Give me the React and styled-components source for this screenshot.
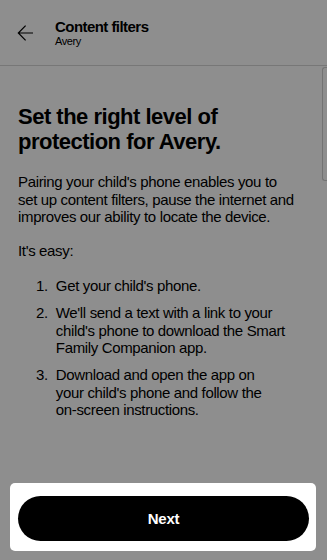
import React from "react";
import styled, { createGlobalStyle } from "styled-components";

const GlobalStyle = createGlobalStyle`
  html, body { margin: 0; padding: 0; background: #ffffff; }
  body { font-family: "Liberation Sans", Arial, sans-serif; color: #000; }
  * { box-sizing: border-box; }
`;

const Page = styled.div`
  position: relative;
  min-height: 100vh;
  display: flex;
  flex-direction: column;
  background: #ffffff;
`;

const Header = styled.header`
  height: 66px;
  display: flex;
  align-items: flex-start;
  gap: 22px;
  padding: 19px 0 0 17px;
  border-bottom: 1px solid #d6d6d6;
`;

const BackButton = styled.button`
  width: 16px;
  height: 16px;
  margin-top: 6px;
  padding: 0;
  border: 0;
  background: none;
  display: flex;
  color: #000;
`;

const TitleBlock = styled.div`
  display: flex;
  flex-direction: column;
`;

const HeaderTitle = styled.div`
  font-size: 15px;
  line-height: 16px;
  font-weight: 700;
  letter-spacing: -0.55px;
`;

const HeaderSub = styled.div`
  font-size: 11px;
  line-height: 12px;
  letter-spacing: -0.4px;
`;

const ScrollThumb = styled.div`
  position: absolute;
  top: 67px;
  right: 0;
  width: 5px;
  height: 114px;
  background: #ffffff;
  border: 1px solid #cfcfcf;
  border-right: 0;
  border-radius: 3px 0 0 3px;
`;

const Main = styled.main`
  padding: 38px 20px 0 18px;
`;

const Heading = styled.h1`
  margin: 0;
  font-size: 22px;
  line-height: 25px;
  font-weight: 700;
  letter-spacing: -0.5px;
`;

const Para = styled.p`
  margin: ${(p) => p.$top}px 0 0;
  font-size: 15px;
  line-height: 17.5px;
  letter-spacing: -0.35px;
`;

const Steps = styled.ol`
  list-style: none;
  margin: 17.5px 0 0;
  padding: 0 0 0 18px;
  display: flex;
  flex-direction: column;
  gap: 9.5px;
`;

const Step = styled.li`
  display: flex;
  gap: 8px;
  font-size: 15px;
  line-height: 17.5px;
  letter-spacing: -0.35px;
`;

const StepNum = styled.span`
  flex: none;
`;

const Footer = styled.div`
  position: relative;
  margin: auto 11px 9px 10px;
  padding: 13px 7px 10px 8px;
  background: #ffffff;
  border-radius: 5px;
  box-shadow: 0 0 0 2000px rgba(0, 0, 0, 0.445);
`;

const NextButton = styled.button`
  width: 100%;
  height: 45px;
  border: 0;
  border-radius: 23px;
  background: #000;
  color: #fff;
  font-family: "Liberation Sans", Arial, sans-serif;
  font-size: 15px;
  font-weight: 700;
  letter-spacing: -0.2px;
`;

function BackArrow() {
  return (
    <svg width="16" height="16" viewBox="0 0 16 16" fill="none" stroke="currentColor" strokeWidth="1.2">
      <path d="M16 8H1.3M8.6 0.6L1.3 8l7.3 7.4" />
    </svg>
  );
}

const steps = [
  ["Get your child's phone."],
  [
    "We'll send a text with a link to your",
    "child's phone to download the Smart",
    "Family Companion app.",
  ],
  [
    "Download and open the app on",
    "your child's phone and follow the",
    "on-screen instructions.",
  ],
];

function Lines({ lines }) {
  return lines.map((l, i) => (
    <React.Fragment key={i}>
      {i > 0 && <br />}
      {l}
    </React.Fragment>
  ));
}

export default function App() {
  return (
    <>
      <GlobalStyle />
      <Page>
        <Header>
          <BackButton aria-label="Back">
            <BackArrow />
          </BackButton>
          <TitleBlock>
            <HeaderTitle>Content filters</HeaderTitle>
            <HeaderSub>Avery</HeaderSub>
          </TitleBlock>
        </Header>
        <ScrollThumb />
        <Main>
          <Heading>
            Set the right level of
            <br />
            protection for Avery.
          </Heading>
          <Para $top={19}>
            <Lines
              lines={[
                "Pairing your child's phone enables you to",
                "set up content filters, pause the internet and",
                "improves our ability to locate the device.",
              ]}
            />
          </Para>
          <Para $top={16.5}>It's easy:</Para>
          <Steps>
            {steps.map((s, i) => (
              <Step key={i}>
                <StepNum>{i + 1}.</StepNum>
                <span>
                  <Lines lines={s} />
                </span>
              </Step>
            ))}
          </Steps>
        </Main>
        <Footer>
          <NextButton>Next</NextButton>
        </Footer>
      </Page>
    </>
  );
}
